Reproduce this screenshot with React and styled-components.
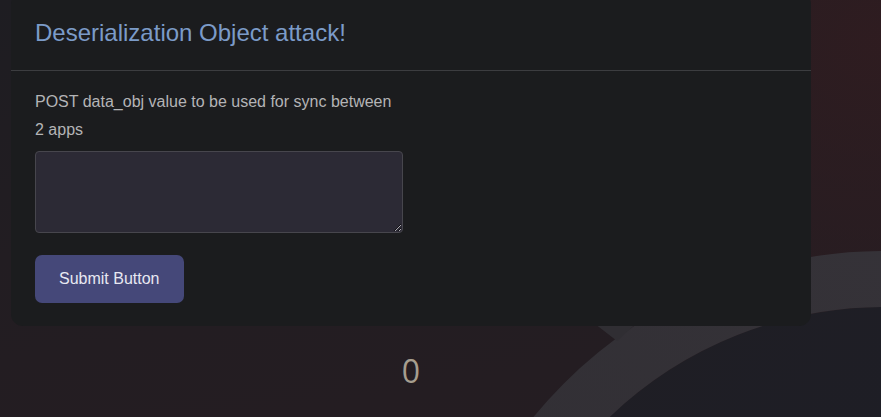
import React from "react";
import styled, { createGlobalStyle } from "styled-components";

const Global = createGlobalStyle`
  html, body {
    margin: 0;
    padding: 0;
    height: 100%;
  }
  body {
    background: #221d22;
    font-family: "Liberation Sans", Arial, sans-serif;
    overflow: hidden;
  }
  #root { height: 100%; }
`;

const Page = styled.div`
  position: relative;
  width: 100%;
  height: 417px;
  overflow: hidden;
  background:
    radial-gradient(ellipse 420px 380px at 880px 40px, rgba(48, 28, 32, 0.9), rgba(48, 28, 32, 0) 100%),
    linear-gradient(170deg, #1e1d22 0%, #221d22 45%, #251d22 100%);
`;

const Backdrop = styled.svg`
  position: absolute;
  left: 0;
  top: 0;
  width: 881px;
  height: 417px;
  pointer-events: none;
`;

const Content = styled.main`
  position: relative;
  width: 800px;
  padding-left: 11px;
  display: flex;
  flex-direction: column;
  align-items: stretch;
`;

const Card = styled.section`
  margin-top: -8px;
  background: #1b1c1e;
  border-radius: 12px;
  display: flex;
  flex-direction: column;
`;

const CardHeader = styled.header`
  padding: 27px 24px 22px;
  border-bottom: 1px solid #3c3d40;
`;

const Title = styled.h1`
  margin: 0;
  font-size: 24px;
  line-height: 28.8px;
  font-weight: 400;
  color: #7b9bc8;
`;

const CardBody = styled.form`
  padding: 17px 24px 23px;
  width: 368px;
  display: flex;
  flex-direction: column;
`;

const Label = styled.label`
  font-size: 16px;
  line-height: 28px;
  color: #b4b4b6;
`;

const TextArea = styled.textarea`
  margin-top: 7px;
  box-sizing: border-box;
  width: 368px;
  height: 82px;
  background: #2c2a35;
  border: 1px solid #47464d;
  border-radius: 4px;
  color: #ddd;
  font-family: "Liberation Sans", Arial, sans-serif;
  font-size: 15px;
  padding: 6px 8px;
  outline: none;
`;

const Button = styled.button`
  margin-top: 22px;
  align-self: flex-start;
  height: 48px;
  padding: 0 24px;
  background: #454879;
  color: #e8e8f2;
  border: none;
  border-radius: 7px;
  font-family: "Liberation Sans", Arial, sans-serif;
  font-size: 16px;
  cursor: pointer;
`;

const Counter = styled.div`
  margin-top: 26px;
  text-align: center;
  font-family: "Open Sans", "Liberation Sans", sans-serif;
  font-size: 32px;
  line-height: 38px;
  color: #a69e8f;
`;

export default function App() {
  return (
    <>
      <Global />
      <Page>
        <Backdrop viewBox="0 0 881 417">
          <defs>
            <linearGradient id="ring" x1="0" y1="1" x2="1" y2="0">
              <stop offset="0" stopColor="#2e2c31" />
              <stop offset="1" stopColor="#37343a" />
            </linearGradient>
            <linearGradient id="inner" x1="0" y1="0" x2="1" y2="1">
              <stop offset="0" stopColor="#1f1e24" />
              <stop offset="1" stopColor="#1c1e28" />
            </linearGradient>
          </defs>
          <circle cx="884" cy="704" r="397" fill="url(#inner)" />
          <circle cx="884" cy="704" r="425" fill="none" stroke="url(#ring)" strokeWidth="56" />
          <polygon points="590,320 617,341 640,320" fill="#302e33" />
        </Backdrop>
        <Content>
          <Card>
            <CardHeader>
              <Title>Deserialization Object attack!</Title>
            </CardHeader>
            <CardBody onSubmit={(e) => e.preventDefault()}>
              <Label htmlFor="data_obj">POST data_obj value to be used for sync between 2 apps</Label>
              <TextArea id="data_obj" name="data_obj" />
              <Button type="submit">Submit Button</Button>
            </CardBody>
          </Card>
          <Counter>0</Counter>
        </Content>
      </Page>
    </>
  );
}
